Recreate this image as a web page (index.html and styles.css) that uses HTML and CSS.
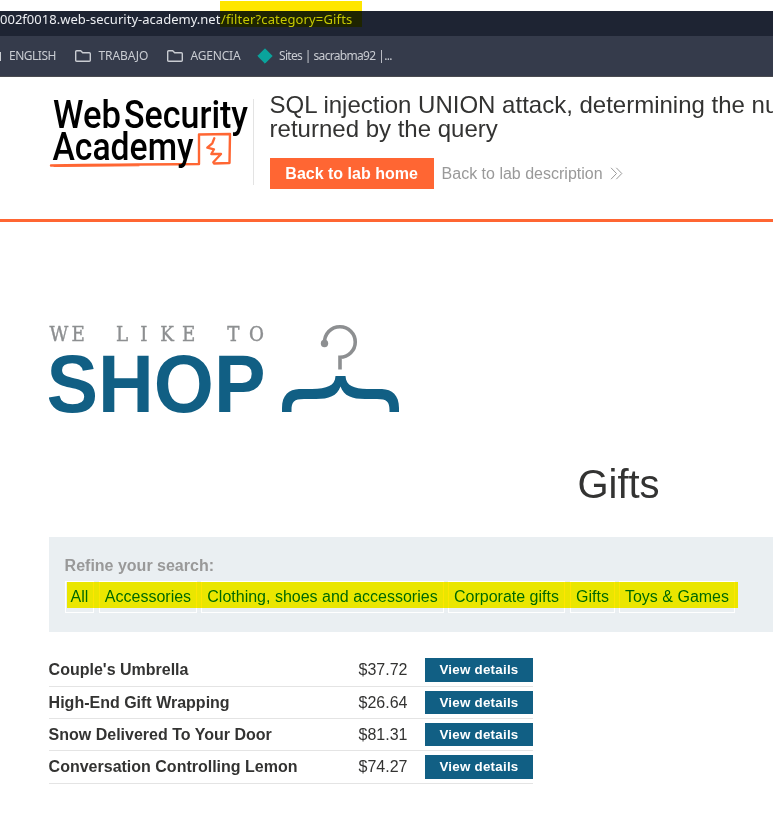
FILE: index.html
```html
<!DOCTYPE html>
<html lang="en">
<head>
<meta charset="utf-8">
<title>SQL injection UNION attack</title>
<link rel="stylesheet" href="styles.css">
</head>
<body>
<div class="browser">
  <div class="address"><span class="host">002f0018.web-security-academy.net</span><span class="path">/filter?category=Gifts</span><i class="marker marker-url"></i></div>
  <div class="bookmarks">
    <i class="cut-folder"></i>
    <span class="bm english">ENGLISH</span>
    <svg class="folder" width="16" height="12" viewBox="0 0 16 12"><path d="M.7 1.7q0-1 1-1h4l2 2h6.600q1 0 1 1v6.600q0 1-1 1H1.700q-1 0-1-1z"/></svg>
    <span class="bm trabajo">TRABAJO</span>
    <svg class="folder" width="16" height="12" viewBox="0 0 16 12"><path d="M.7 1.700q0-1 1-1h4l2 2h6.600q1 0 1 1v6.600q0 1-1 1H1.700q-1 0-1-1z"/></svg>
    <span class="bm agencia">AGENCIA</span>
    <svg class="gem" width="16" height="16" viewBox="0 0 16 16"><path d="M8 .8 15.200 8 8 15.200.8 8z" fill="#0aa39c" stroke="#0aa39c" stroke-linejoin="round"/></svg>
    <span class="bm sites">Sites | sacrabma92 |...</span>
  </div>
</div>
<header class="lab">
  <svg class="academy" width="205" height="86" viewBox="0 5 204 86">
    <g class="academy-line">
      <path d="M2 71.500q60-1 148-1.500L150 40.500 181 40 180.500 69 165 69.500"/>
      <path d="M165.300 44.300 163.300 49.300 158.300 53.700 165 55.300 162.300 60 172 60 164.300 68.300" stroke-width="2.300"/>
      <path d="M5 72.500 90 71.800" stroke-width="1"/>
    </g>
    <g class="academy-text">
      <text x="4" y="34" textLength="68" lengthAdjust="spacingAndGlyphs">Web</text>
      <text x="75" y="34" textLength="124" lengthAdjust="spacingAndGlyphs">Security</text>
      <text x="3.500" y="66" textLength="141" lengthAdjust="spacingAndGlyphs">Academy</text>
    </g>
  </svg>
  <div class="lab-info">
    <h2>SQL injection UNION attack, determining the number of columns<br>returned by the query</h2>
    <div class="lab-links">
      <a class="home">Back to lab home</a>
      <a class="desc">Back to lab description</a>
      <svg class="chevrons" width="13" height="13" viewBox="0 0 13 13"><path d="M1 .8 6.500 6.500 1 12.200M6.300.8 11.800 6.500 6.300 12.200"/></svg>
    </div>
  </div>
</header>
<main>
  <svg class="shop" width="360" height="100" viewBox="0 0 360 100">
    <text class="like" transform="scale(.87 1)" y="21" x="0.500 26 41 77 105 128 153 168 205 230">WE LIKE TO</text>
    <text class="shop-word" x="-2.500" y="92" textLength="219" lengthAdjust="spacingAndGlyphs">SHOP</text>
    <path class="hook" d="M275.500 23.500C275 14 282 6.700 291 6.700a15 15 0 0 1 0 30.500V49.500"/>
    <circle cx="275.500" cy="23.500" r="3.700" fill="#8d8f91"/>
    <path class="hanger" d="M233 92V88C233 75 240 69.500 250 69H263C278 68.500 286 66 286.500 56H296.500C297 66 305 68.500 318 69H333C343 69.500 350 75 350 88V92H340.500V90C340.500 82 338 79 328 79H316C303 79 295 76 291.500 66.500C288 76 280 79 267 79H255C245 79 242.500 82 242.500 90V92Z"/>
  </svg>
  <h1>Gifts</h1>
  <section class="search">
    <label>Refine your search:</label>
    <nav class="tags">
      <a class="t-all">All</a><a class="t-acc">Accessories</a><a class="t-clo">Clothing, shoes and accessories</a><a class="t-cor">Corporate gifts</a><a class="t-gif">Gifts</a><a class="t-toy">Toys &amp; Games</a>
      <i class="marker marker-tags"></i>
    </nav>
  </section>
  <div class="products">
    <div class="row tall"><b>Couple's Umbrella</b><span>$37.72</span><a>View details</a></div>
    <div class="row"><b>High-End Gift Wrapping</b><span>$26.64</span><a>View details</a></div>
    <div class="row"><b>Snow Delivered To Your Door</b><span>$81.31</span><a>View details</a></div>
    <div class="row tall"><b>Conversation Controlling Lemon</b><span>$74.27</span><a>View details</a></div>
  </div>
</main>
</body>
</html>
```
FILE: styles.css
```css
* { box-sizing: border-box; }
body { margin: 0; height: 813px; overflow: hidden; background: #fff; color: #333332; font: 16px/20px "Liberation Sans", Arial, sans-serif; }

/* browser chrome */
.browser { padding-top: 11px; font-family: "Noto Sans", "Open Sans", sans-serif; background: #fff; }
.address { position: relative; display: flex; height: 25px; line-height: 17px; background: #1e2433; color: #eceef2; font-size: 13px; white-space: nowrap; }
.host { width: 221px; letter-spacing: 0.02px; }
.path { color: #c6c9cf; letter-spacing: 0.15px; }
.bookmarks { display: flex; align-items: center; height: 41px; background: #353b4b; border-bottom: 1px solid #4a4b50; color: #c9ccd2; font-size: 12px; white-space: nowrap; }
.cut-folder { width: 1px; height: 9px; background: #c9ccd2; margin-right: 8px; }
.bm { line-height: 18px; flex: none; }
.english { width: 66px; letter-spacing: -0.5px; }
.trabajo { width: 68.500px; letter-spacing: -0.1px; }
.agencia { width: 66.500px; letter-spacing: -0.2px; }
.sites { letter-spacing: -0.68px; word-spacing: 0.3px; }
.folder { flex: none; margin-right: 7.500px; fill: none; stroke: #c9ccd2; stroke-width: 1.4; }
.gem { flex: none; margin-right: 6px; }

/* highlighter strokes */
.marker { position: absolute; background: #ffe600; mix-blend-mode: darken; }
.marker-url { left: 220px; top: -10px; width: 142px; height: 26px; }
.marker-tags { left: 2px; top: 1px; width: 671px; height: 26px; }

/* lab banner */
.lab { display: flex; height: 145px; padding: 17px 0 0 49px; border-bottom: 3px solid #ff6633; overflow: hidden; }
.academy { flex: none; margin-top: 5px; border-right: 1px solid #e3e3e3; }
.academy-text { font: 500 39px Roboto, sans-serif; fill: #000; }
.academy-line { fill: none; stroke: #ff6633; stroke-width: 2.4; stroke-linejoin: round; stroke-linecap: round; }
.lab-info { flex: none; margin-left: 15.600px; }
.lab h2 { margin: -1px 0 0; font-size: 24px; line-height: 24px; font-weight: 400; white-space: nowrap; }
.lab-links { display: flex; align-items: center; margin-top: 17px; }
.home { width: 164px; height: 31px; line-height: 31px; background: #ff6633; color: #fff; font-weight: 700; text-align: center; }
.desc { margin-left: 8px; color: #999; }
.chevrons { margin-left: 7.500px; fill: none; stroke: #999; stroke-width: 1; }

/* shop */
main { padding: 98px 0 0 49px; }
.shop { display: block; }
.like { font: 21px "DejaVu Serif", serif; fill: #8d8f91; stroke: #8d8f91; stroke-width: 0.4; }
.shop-word { font: 700 81px "Liberation Sans", sans-serif; fill: #115f84; }
.hook { fill: none; stroke: #8d8f91; stroke-width: 3.6; }
.hanger { fill: #115f84; }
h1 { width: 1139px; margin: 44px 0 0; font-size: 40px; line-height: 40px; font-weight: 400; text-align: center; }
.search { width: 1140px; height: 95px; margin-top: 33px; padding: 19px 15.600px; background: #eaeff2; }
.search label { display: block; color: #999; font-weight: 700; }
.tags { position: relative; display: flex; margin: 5px 0 0 0.400px; color: #006699; }
.tags a { height: 32px; line-height: 29px; border: 1px solid #fff; text-align: center; white-space: nowrap; flex: none; }
.t-all { width: 29px; margin-right: 5px; }
.t-acc { width: 98px; margin-right: 4px; }
.t-clo { width: 243px; margin-right: 4px; }
.t-cor { width: 117px; margin-right: 5px; }
.t-gif { width: 45px; margin-right: 4px; }
.t-toy { width: 116px; }
.products { width: 484px; margin-top: 22px; }
.row { display: grid; grid-template-columns: 309.500px 66.500px 108px; height: 32px; padding-top: 4px; border-bottom: 1px solid #e4e4e4; line-height: 23px; }
.row b { margin-left: -0.400px; }
.row a { height: 23px; background: #115f84; color: #fff; font-size: 13.333px; font-weight: 700; line-height: 23px; letter-spacing: 0.25px; text-align: center; }
.row.tall { height: 33px; }
.row.tall a { height: 24px; line-height: 24px; }
```
